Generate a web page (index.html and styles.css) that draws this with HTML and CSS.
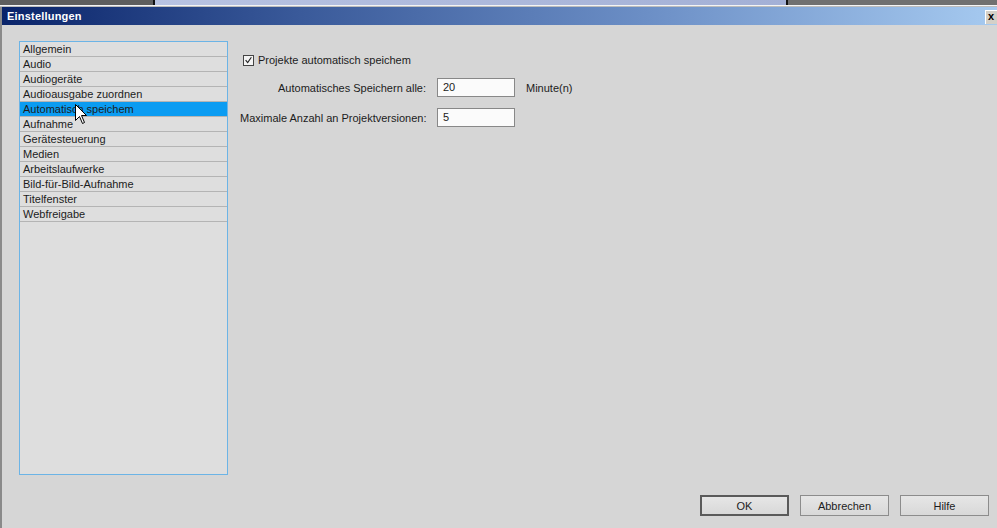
FILE: index.html
```html
<!DOCTYPE html>
<html lang="de">
<head>
<meta charset="utf-8">
<title>Einstellungen</title>
<link rel="stylesheet" href="styles.css">
</head>
<body>
<div class="app">
  <div class="strip">
    <div class="strip-a"></div>
    <div class="strip-b"></div>
    <div class="strip-c"></div>
  </div>
  <div class="strip-line"></div>
  <div class="window">
    <div class="titlebar">
      <span class="title">Einstellungen</span>
      <span class="close">x</span>
    </div>
    <div class="dialog">
      <div class="main">
        <ul class="list">
          <li>Allgemein</li>
          <li>Audio</li>
          <li>Audiogeräte</li>
          <li>Audioausgabe zuordnen</li>
          <li class="selected">Automatisch speichem</li>
          <li>Aufnahme</li>
          <li>Gerätesteuerung</li>
          <li>Medien</li>
          <li>Arbeitslaufwerke</li>
          <li>Bild-für-Bild-Aufnahme</li>
          <li>Titelfenster</li>
          <li>Webfreigabe</li>
        </ul>
        <div class="cursor">
          <svg width="13" height="21" viewBox="0 0 13 21"><path d="M0.5 0.5 L0.5 16.5 L4.5 12.5 L7.5 19.5 L9.5 18.5 L6.5 11.5 L11.5 11.5 Z" fill="#fff" stroke="#000" stroke-width="1"/></svg>
        </div>
        <div class="panel">
          <label class="check-row">
            <span class="checkbox">
              <svg width="11" height="11" viewBox="0 0 11 11"><path d="M2 5 L4.5 8 L9 1.5" fill="none" stroke="#222" stroke-width="1.4"/></svg>
            </span>
            <span>Projekte automatisch speichem</span>
          </label>
          <div class="form">
            <span class="lbl">Automatisches Speichern alle:</span>
            <span class="input">20</span>
            <span class="unit">Minute(n)</span>
            <span class="lbl">Maximale Anzahl an Projektversionen:</span>
            <span class="input">5</span>
            <span class="unit"></span>
          </div>
        </div>
      </div>
      <div class="footer">
        <button class="btn default">OK</button>
        <button class="btn">Abbrechen</button>
        <button class="btn">Hilfe</button>
      </div>
    </div>
  </div>
</div>
</body>
</html>
```
FILE: styles.css
```css
* { box-sizing: border-box; }
html, body { margin: 0; padding: 0; }
body {
  width: 997px;
  height: 528px;
  overflow: hidden;
  background: #d6d6d6;
  font-family: Tahoma, "Liberation Sans", "DejaVu Sans", sans-serif;
  font-size: 11px;
  color: #1c1c1c;
}
.app { display: flex; flex-direction: column; height: 528px; }
.strip { display: flex; height: 5px; }
.strip-a { width: 155px; background: #5e5e5e; border-right: 2px solid #111; }
.strip-b { width: 633px; background: linear-gradient(90deg, #b8c3e2, #a3b0d6); border-right: 2px solid #111; }
.strip-c { flex: 1; background: #707070; }
.strip-line { height: 2px; border-top: 1px solid #f4f4f4; background: #bcbcbc; }
.window {
  flex: 1;
  display: flex;
  flex-direction: column;
  border-left: 2px solid #8a8a8a;
  box-shadow: inset 1px 0 0 #f6f6f6;
}
.titlebar {
  height: 18px;
  display: flex;
  align-items: center;
  justify-content: space-between;
  background: linear-gradient(90deg, #0a246a 0%, #3a5a9a 30%, #6c8fc6 65%, #a6caf0 100%);
  padding-left: 5px;
}
.title {
  color: #fff;
  font-weight: bold;
  font-size: 11px;
  letter-spacing: 0.2px;
}
.close {
  width: 12px;
  height: 14px;
  margin-top: 1px;
  background: #d4d0c8;
  border-top: 1px solid #fff;
  border-left: 1px solid #fff;
  color: #000;
  font-weight: bold;
  font-size: 11px;
  line-height: 11px;
  padding-left: 2px;
  overflow: hidden;
}
.dialog {
  flex: 1;
  display: flex;
  flex-direction: column;
  padding: 16px 8px 12px 17px;
  background: #d6d6d6;
}
.main { flex: 1; display: flex; position: relative; }
.list {
  list-style: none;
  margin: 0;
  padding: 0;
  width: 209px;
  height: 434px;
  border: 1px solid #6cb4e6;
  background: #dedede;
}
.list li {
  height: 15px;
  line-height: 14px;
  padding-left: 3px;
  border-bottom: 1px solid #b4b4b4;
  white-space: nowrap;
}
.list li.selected { background: #0b9cf2; }
.cursor {
  position: absolute;
  left: 56px;
  top: 63px;
  line-height: 0;
}
.panel {
  padding-left: 12px;
  padding-top: 13px;
  display: flex;
  flex-direction: column;
}
.check-row {
  display: flex;
  align-items: center;
  gap: 4px;
  margin-left: 3px;
  height: 12px;
}
.checkbox {
  width: 11px;
  height: 11px;
  border: 1px solid #444;
  background: #f4f4f4;
  display: flex;
  align-items: center;
  justify-content: center;
  line-height: 0;
}
.form {
  margin-top: 12px;
  display: grid;
  grid-template-columns: 186px 78px auto;
  column-gap: 11px;
  row-gap: 11px;
  align-items: center;
}
.lbl { text-align: right; white-space: nowrap; }
.input {
  height: 19px;
  border: 1px solid #888;
  background: #fbfbfb;
  padding-left: 5px;
  line-height: 17px;
}
.unit { white-space: nowrap; }
.footer {
  display: flex;
  justify-content: flex-end;
  gap: 11px;
  margin-top: 20px;
}
.btn {
  width: 89px;
  height: 21px;
  font-family: inherit;
  font-size: 11px;
  color: #1c1c1c;
  background: linear-gradient(#e6e6e6, #d8d8d8);
  border: 1px solid #8c8c8c;
  padding: 0;
}
.btn.default { border: 2px solid #5a5a5a; }
```
